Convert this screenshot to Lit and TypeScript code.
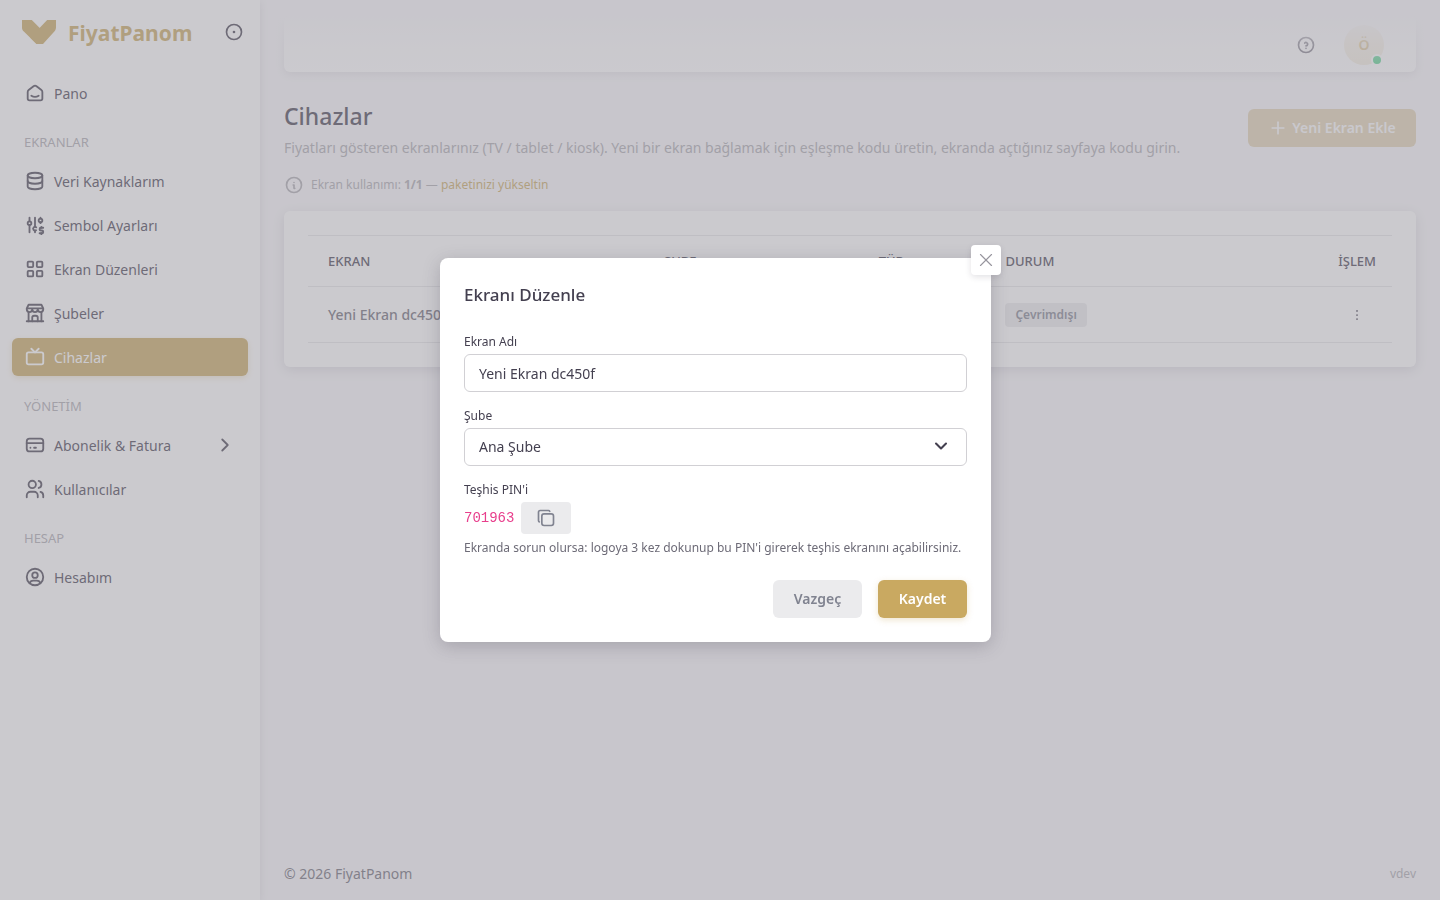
import { LitElement, html, css, svg } from "lit";
import { customElement, property } from "lit/decorators.js";
import { classMap } from "lit/directives/class-map.js";

const CIRCLE = "M3 12a9 9 0 1 0 18 0a9 9 0 1 0 -18 0";

const ICONS: Record<string, string[]> = {
  home: [
    "M19 8.71l-5.333 -4.148a2.666 2.666 0 0 0 -3.274 0l-5.334 4.148a2.665 2.665 0 0 0 -1.029 2.105v7.2a2 2 0 0 0 2 2h12a2 2 0 0 0 2 -2v-7.2c0 -.823 -.38 -1.6 -1.03 -2.105",
    "M16 15c-2.21 1.333 -5.792 1.333 -8 0",
  ],
  database: [
    "M4 6a8 3 0 1 0 16 0a8 3 0 1 0 -16 0",
    "M4 6v6a8 3 0 0 0 16 0v-6",
    "M4 12v6a8 3 0 0 0 16 0v-6",
  ],
  adjustments: [
    "M4 10a2 2 0 1 0 4 0a2 2 0 0 0 -4 0",
    "M6 4v4",
    "M6 12v8",
    "M13.366 14.54a2 2 0 1 0 -.216 3.097",
    "M12 4v10",
    "M12 18v2",
    "M16 7a2 2 0 1 0 4 0a2 2 0 0 0 -4 0",
    "M18 4v1",
    "M18 9v1",
    "M21 15h-2.5a1.5 1.5 0 0 0 0 3h1a1.5 1.5 0 0 1 0 3h-2.5",
    "M19 21v1m0 -8v1",
  ],
  grid: [
    "M4 5a1 1 0 0 1 1 -1h4a1 1 0 0 1 1 1v4a1 1 0 0 1 -1 1h-4a1 1 0 0 1 -1 -1z",
    "M14 5a1 1 0 0 1 1 -1h4a1 1 0 0 1 1 1v4a1 1 0 0 1 -1 1h-4a1 1 0 0 1 -1 -1z",
    "M4 15a1 1 0 0 1 1 -1h4a1 1 0 0 1 1 1v4a1 1 0 0 1 -1 1h-4a1 1 0 0 1 -1 -1z",
    "M14 15a1 1 0 0 1 1 -1h4a1 1 0 0 1 1 1v4a1 1 0 0 1 -1 1h-4a1 1 0 0 1 -1 -1z",
  ],
  store: [
    "M3 21l18 0",
    "M3 7v1a3 3 0 0 0 6 0v-1m0 1a3 3 0 0 0 6 0v-1m0 1a3 3 0 0 0 6 0v-1h-18l2 -4h14l2 4",
    "M5 21l0 -10.15",
    "M19 21l0 -10.15",
    "M9 21v-4a2 2 0 0 1 2 -2h2a2 2 0 0 1 2 2v4",
  ],
  tv: [
    "M3 9a2 2 0 0 1 2 -2h14a2 2 0 0 1 2 2v9a2 2 0 0 1 -2 2h-14a2 2 0 0 1 -2 -2z",
    "M16 3l-4 4l-4 -4",
  ],
  card: [
    "M3 8a3 3 0 0 1 3 -3h12a3 3 0 0 1 3 3v8a3 3 0 0 1 -3 3h-12a3 3 0 0 1 -3 -3z",
    "M3 10l18 0",
    "M7 15l.01 0",
    "M11 15l2 0",
  ],
  users: [
    "M5 7a4 4 0 1 0 8 0a4 4 0 1 0 -8 0",
    "M3 21v-2a4 4 0 0 1 4 -4h4a4 4 0 0 1 4 4v2",
    "M16 3.13a4 4 0 0 1 0 7.75",
    "M21 21v-2a4 4 0 0 0 -3 -3.85",
  ],
  account: [
    CIRCLE,
    "M9 10a3 3 0 1 0 6 0a3 3 0 1 0 -6 0",
    "M6.168 18.849a4 4 0 0 1 3.832 -2.849h4a4 4 0 0 1 3.834 2.855",
  ],
  pin: [CIRCLE, "M11.4 12a.6 .6 0 1 0 1.2 0a.6 .6 0 1 0 -1.2 0"],
  help: [CIRCLE, "M12 16v.01", "M12 13a2 2 0 0 0 .914 -3.782a1.98 1.98 0 0 0 -2.414 .483"],
  info: [CIRCLE, "M12 9h.01", "M11 12h1v4h1"],
  copy: [
    "M7 9.667a2.667 2.667 0 0 1 2.667 -2.667h8.666a2.667 2.667 0 0 1 2.667 2.667v8.666a2.667 2.667 0 0 1 -2.667 2.667h-8.666a2.667 2.667 0 0 1 -2.667 -2.667z",
    "M4.012 16.737a2.005 2.005 0 0 1 -1.012 -1.737v-10c0 -1.1 .9 -2 2 -2h10c.75 0 1.158 .385 1.5 1",
  ],
  plus: ["M12 5v14", "M5 12h14"],
  right: ["M9 6l6 6l-6 6"],
  down: ["M6 9l6 6l6 -6"],
  close: ["M18 6l-12 12", "M6 6l12 12"],
  dots: ["M12 12h.01", "M12 19h.01", "M12 5h.01"],
};

const icon = (name: string, size = 22, stroke = 2) => html`
  <svg width=${size} height=${size} viewBox="0 0 24 24" fill="none" stroke="currentColor"
    stroke-width=${stroke} stroke-linecap="round" stroke-linejoin="round" aria-hidden="true">
    ${ICONS[name].map((d) => svg`<path d=${d}></path>`)}
  </svg>`;

const base = css`
  * { box-sizing: border-box; }
  svg { display: block; flex: none; }
  a { color: inherit; text-decoration: none; }
  h1, h2, p, ul { margin: 0; padding: 0; }
  button, input, select { font: inherit; color: inherit; margin: 0; }
  button { border: 0; background: none; padding: 0; cursor: pointer; }
`;

interface Entry { label: string; icon?: string; heading?: boolean; more?: boolean; active?: boolean; }

const MENU: Entry[] = [
  { label: "Pano", icon: "home" },
  { label: "EKRANLAR", heading: true },
  { label: "Veri Kaynaklarım", icon: "database" },
  { label: "Sembol Ayarları", icon: "adjustments" },
  { label: "Ekran Düzenleri", icon: "grid" },
  { label: "Şubeler", icon: "store" },
  { label: "Cihazlar", icon: "tv", active: true },
  { label: "YÖNETİM", heading: true },
  { label: "Abonelik & Fatura", icon: "card", more: true },
  { label: "Kullanıcılar", icon: "users" },
  { label: "HESAP", heading: true },
  { label: "Hesabım", icon: "account" },
];

@customElement("side-menu")
class SideMenu extends LitElement {
  static styles = [base, css`
    :host {
      display: block; width: 260px; flex: none; background: #fff; z-index: 1;
      box-shadow: 0 2px 8px rgba(47, 43, 61, .12); color: #444050;
    }
    .brand { display: flex; align-items: center; height: 64px; padding: 0 16px 0 22px; gap: 12px; color: #c9a961; }
    .name { font-size: 21px; font-weight: 700; flex: 1; padding-top: 2px; }
    .pin { color: #444050; }
    .list { list-style: none; display: flex; flex-direction: column; gap: 6px; padding: 10px 12px; }
    .heading { height: 38px; padding: 8px 12px 0; line-height: 32px; font-size: 13px; color: #acaab1; }
    .link { display: flex; align-items: center; gap: 8px; height: 38px; padding: 0 12px; border-radius: 6px; }
    .label { flex: 1; padding-top: 2px; }
    .active { background: #c9a961; color: #fff; box-shadow: 0 2px 6px rgba(201, 169, 97, .3); }
  `];

  render() {
    return html`
      <div class="brand">
        <svg width="34" height="24" viewBox="0 0 32 22" preserveAspectRatio="none" fill="currentColor" aria-hidden="true">
          <path d="M0 0V6.854C0 6.854 -.133 9.012 1.981 10.839L13.691 21.996L19.781 21.918L18.804 9.882L16.495 7.173L9.238 0Z"></path>
          <path d="M7.773 16.357L23.656 0H32V6.884C32 6.884 31.826 9.178 30.659 10.406L19.782 22H13.694Z"></path>
        </svg>
        <a class="name" href="#">FiyatPanom</a>
        <button class="pin" aria-label="Menüyü sabitle">${icon("pin", 20)}</button>
      </div>
      <nav>
        <ul class="list">
          ${MENU.map((m) => m.heading
            ? html`<li class="heading">${m.label}</li>`
            : html`<li><a class=${classMap({ link: true, active: !!m.active })} href="#">
                ${icon(m.icon!)}<span class="label">${m.label}</span>${m.more ? icon("right") : null}
              </a></li>`)}
        </ul>
      </nav>`;
  }
}

@customElement("device-page")
class DevicePage extends LitElement {
  static styles = [base, css`
    :host { display: flex; flex-direction: column; flex: 1; min-width: 0; padding: 16px 24px; position: relative; }
    .fade {
      position: absolute; inset: 0 0 auto 0; height: 88px; pointer-events: none;
      background: linear-gradient(180deg, rgba(248, 247, 250, 1) 18%, rgba(248, 247, 250, .45) 50%, rgba(248, 247, 250, 0));
    }
    .topbar {
      display: flex; align-items: center; justify-content: flex-end; gap: 28px; height: 56px;
      padding: 2px 32px 0; background: #fff; border-radius: 6px; color: #444050;
      box-shadow: 0 2px 8px rgba(47, 43, 61, .12);
    }
    .avatar {
      position: relative; width: 40px; height: 40px; border-radius: 50%;
      background: #f4ecda; color: #c9a961; font-weight: 600;
    }
    .online {
      position: absolute; right: 1px; bottom: -1px; width: 12px; height: 12px; border-radius: 50%;
      background: #28c76f; border: 2px solid #fff;
    }
    .head { display: flex; align-items: center; justify-content: space-between; padding-top: 24px; }
    h1 { font-size: 23px; line-height: 40px; font-weight: 500; color: #444050; }
    .lead { color: #acaab1; line-height: 24px; }
    .add {
      display: flex; align-items: center; justify-content: center; gap: 4px; width: 168px; height: 38px;
      border-radius: 6px; background: #c9a961; color: #fff; font-weight: 600; opacity: .45;
    }
    .usage { display: flex; align-items: center; gap: 7px; padding: 13px 0 14px; font-size: 12px; line-height: 24px; color: #acaab1; }
    .usage b { font-weight: 700; }
    .usage a { color: #c9a961; }
    .card { background: #fff; border-radius: 6px; padding: 24px; box-shadow: 0 3px 12px rgba(47, 43, 61, .14); }
    table { width: 100%; border-collapse: collapse; table-layout: fixed; }
    tr { border-top: 1px solid #e6e6e8; border-bottom: 1px solid #e6e6e8; }
    th, td { padding: 0 20px; text-align: left; font-weight: 500; }
    th { height: 51px; font-size: 13px; color: #444050; }
    td { height: 56px; }
    .name { width: 31%; }
    .branch { width: 19.8%; }
    .kind { width: 11.7%; }
    .action { text-align: right; padding-right: 16px; }
    .badge {
      display: inline-block; padding: 0 10px; height: 24px; line-height: 24px; border-radius: 4px;
      background: #ebebed; color: #808390; font-size: 12px; font-weight: 600;
    }
    .menu { display: inline-grid; place-items: center; width: 38px; height: 38px; vertical-align: middle; color: #444050; }
    .footer { display: flex; align-items: center; justify-content: space-between; margin-top: auto; line-height: 20px; }
    .version { font-size: 12px; color: #acaab1; }
  `];

  render() {
    return html`
      <header class="topbar">
        <button aria-label="Yardım">${icon("help", 20)}</button>
        <button class="avatar">Ö<span class="online"></span></button>
      </header>
      <div class="fade"></div>
      <div class="head">
        <div>
          <h1>Cihazlar</h1>
          <p class="lead">Fiyatları gösteren ekranlarınız (TV / tablet / kiosk). Yeni bir ekran bağlamak için eşleşme kodu üretin, ekranda açtığınız sayfaya kodu girin.</p>
        </div>
        <button class="add">${icon("plus", 20)}Yeni Ekran Ekle</button>
      </div>
      <div class="usage">
        ${icon("info", 20)}
        <span>Ekran kullanımı: <b>1/1</b> — <a href="#">paketinizi yükseltin</a></span>
      </div>
      <section class="card">
        <table>
          <thead>
            <tr><th class="name">EKRAN</th><th class="branch">ŞUBE</th><th class="kind">TÜR</th><th>DURUM</th><th class="action">İŞLEM</th></tr>
          </thead>
          <tbody>
            <tr>
              <td>Yeni Ekran dc450f</td><td></td><td></td>
              <td><span class="badge">Çevrimdışı</span></td>
              <td class="action"><button class="menu" aria-label="İşlemler">${icon("dots", 14, 3)}</button></td>
            </tr>
          </tbody>
        </table>
      </section>
      <footer class="footer"><span>© 2026 FiyatPanom</span><span class="version">vdev</span></footer>`;
  }
}

@customElement("edit-dialog")
class EditDialog extends LitElement {
  @property() name = "Yeni Ekran dc450f";

  static styles = [base, css`
    :host {
      position: fixed; inset: 0; z-index: 5; display: flex; align-items: center; justify-content: center;
      padding-right: 9px; background: rgba(151, 149, 158, .5);
    }
    .dialog {
      position: relative; width: 551px; max-width: 100%; padding: 24px; background: #fff;
      border-radius: 8px; box-shadow: 0 4px 18px rgba(47, 43, 61, .22);
    }
    .close {
      position: absolute; top: -13px; right: -10px; display: grid; place-items: center;
      width: 30px; height: 30px; border-radius: 4px; background: #fff; color: #97959e;
      box-shadow: 0 2px 6px rgba(47, 43, 61, .14);
    }
    h2 { font-size: 17px; line-height: 26px; font-weight: 500; color: #444050; padding-bottom: 24px; }
    .label { display: block; font-size: 12px; line-height: 20px; color: #444050; }
    .field { padding-bottom: 14px; }
    .control {
      display: block; width: 100%; height: 38px; margin-top: 2px; padding: 0 14px; appearance: none;
      border: 1px solid #d1d0d4; border-radius: 6px; background: #fff; color: #444050; outline: 0;
    }
    .picker { display: grid; align-items: center; justify-items: end; color: #444050; }
    .picker > * { grid-area: 1 / 1; }
    .picker svg { margin-right: 16px; pointer-events: none; z-index: 1; }
    .pin { display: flex; align-items: center; gap: 7px; padding-top: 2px; }
    code { font: 14px/22px "Liberation Mono", monospace; color: #e83e8c; }
    .copy { display: grid; place-items: center; width: 50px; height: 32px; border-radius: 4px; background: #ebebed; color: #808390; }
    .hint { font-size: 12px; line-height: 20px; padding-top: 4px; white-space: nowrap; }
    .actions { display: flex; justify-content: flex-end; gap: 16px; padding-top: 22px; }
    .btn { width: 89px; height: 38px; border-radius: 6px; font-weight: 600; }
    .cancel { background: #ebebed; color: #808390; }
    .save { background: #c9a961; color: #fff; box-shadow: 0 2px 6px rgba(201, 169, 97, .3); }
  `];

  render() {
    return html`
      <form class="dialog" role="dialog" aria-labelledby="title" @submit=${(e: Event) => e.preventDefault()}>
        <button type="button" class="close" aria-label="Kapat">${icon("close", 22, 1.25)}</button>
        <h2 id="title">Ekranı Düzenle</h2>
        <div class="field">
          <label class="label" for="name">Ekran Adı</label>
          <input class="control" id="name" .value=${this.name}>
        </div>
        <div class="field">
          <label class="label" for="branch">Şube</label>
          <div class="picker">
            <select class="control" id="branch"><option>Ana Şube</option></select>
            ${icon("down", 20, 2.5)}
          </div>
        </div>
        <span class="label">Teşhis PIN'i</span>
        <div class="pin">
          <code>701963</code>
          <button type="button" class="copy" aria-label="PIN'i kopyala">${icon("copy", 20)}</button>
        </div>
        <p class="hint">Ekranda sorun olursa: logoya 3 kez dokunup bu PIN'i girerek teşhis ekranını açabilirsiniz.</p>
        <div class="actions">
          <button type="button" class="btn cancel">Vazgeç</button>
          <button type="submit" class="btn save">Kaydet</button>
        </div>
      </form>`;
  }
}

@customElement("app-root")
class AppRoot extends LitElement {
  static styles = css`
    :host {
      display: flex; min-height: 100vh; background: #f8f7fa; color: #6d6b77;
      font: 14px/22px "Noto Sans", sans-serif;
    }
  `;

  render() {
    return html`<side-menu></side-menu><device-page></device-page><edit-dialog></edit-dialog>`;
  }
}
